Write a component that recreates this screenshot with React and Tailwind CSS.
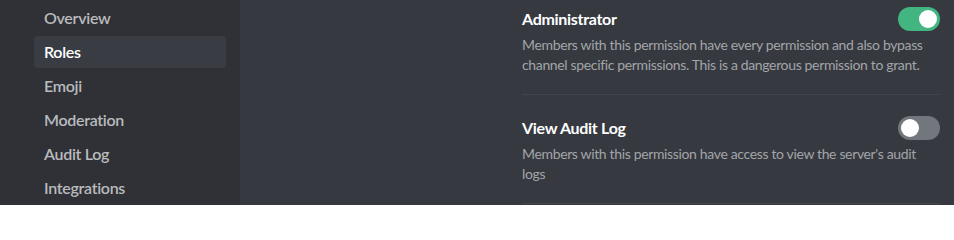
import { useState } from 'react'

const navItems = ['Overview', 'Roles', 'Emoji', 'Moderation', 'Audit Log', 'Integrations']

const permissions = [
  {
    id: 'admin',
    title: 'Administrator',
    description:
      'Members with this permission have every permission and also bypass channel specific permissions. This is a dangerous permission to grant.',
    on: true
  },
  {
    id: 'audit',
    title: 'View Audit Log',
    description: "Members with this permission have access to view the server's audit logs",
    on: false
  }
]

function Toggle({ checked, onChange }) {
  return (
    <button
      type="button"
      onClick={onChange}
      className={`relative w-[42px] h-[24px] rounded-full shrink-0 transition-colors ${
        checked ? 'bg-[#43b581]' : 'bg-[#72767d]'
      }`}
    >
      <span
        className={`absolute top-[3px] w-[18px] h-[18px] rounded-full bg-white transition-all ${
          checked ? 'left-[21px]' : 'left-[3px]'
        }`}
      />
    </button>
  )
}

function App() {
  const [active, setActive] = useState('Roles')
  const [perms, setPerms] = useState(permissions)

  const flip = (id) => setPerms(perms.map((p) => (p.id === id ? { ...p, on: !p.on } : p)))

  return (
    <div className="flex h-[205px] w-full overflow-hidden bg-[#36393f] font-['Lato','Noto_Sans',sans-serif]">
      {/* Sidebar */}
      <div className="w-[240px] shrink-0 bg-[#2f3136] pt-[2px] pl-[34px] pr-[14px] flex flex-col gap-[2px]">
        {navItems.map((item) => (
          <div
            key={item}
            onClick={() => setActive(item)}
            className={`h-[32px] shrink-0 flex items-center px-[10px] rounded-[4px] text-[16px] font-semibold tracking-[-0.3px] cursor-pointer ${
              active === item ? 'bg-[#393c43] text-white' : 'text-[#b9bbbe]'
            }`}
          >
            {item}
          </div>
        ))}
      </div>

      {/* Permissions */}
      <div className="flex-1 min-w-0 pl-[282px] pr-[14px] pt-[7px]">
        {perms.map((p, i) => (
          <div key={p.id} className={`border-b border-[#42454b] pb-[19px] ${i > 0 ? 'pt-[21px]' : ''}`}>
            <div className="h-[24px] flex items-center justify-between">
              <span className="text-white text-[16px] font-bold tracking-[-0.3px]">{p.title}</span>
              <Toggle checked={p.on} onChange={() => flip(p.id)} />
            </div>
            <p className="mt-[4px] text-[14px] leading-[20px] tracking-[-0.35px] text-[#a2a5a9] pr-[4px]">
              {p.description}
            </p>
          </div>
        ))}
      </div>
    </div>
  )
}

export default App
